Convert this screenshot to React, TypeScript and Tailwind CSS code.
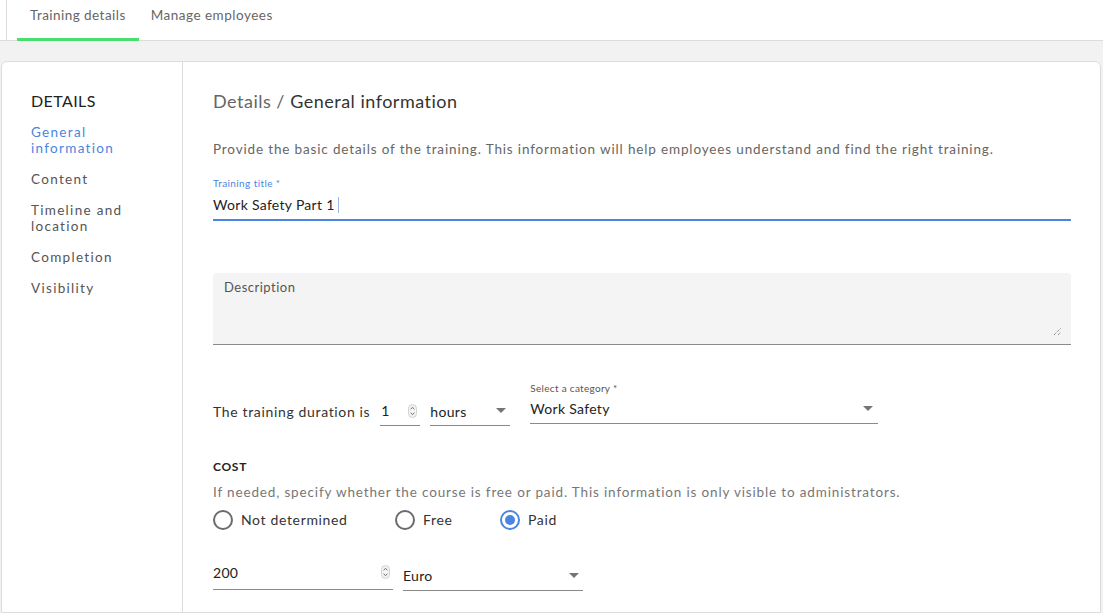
import React from "react";

const Caret = () => (
  <svg width="10" height="6" viewBox="0 0 10 6" className="shrink-0">
    <path d="M0 0 L10 0 L5 5 Z" fill="#757575" />
  </svg>
);

const Spinner = () => (
  <svg width="9" height="14" viewBox="0 0 9 14" className="shrink-0">
    <rect x="0.5" y="0.5" width="8" height="13" rx="4" fill="#f4f4f4" stroke="#c8c8c8" strokeWidth="0.8" />
    <path d="M2.6 5.2 L4.5 3.4 L6.4 5.2" fill="none" stroke="#555" strokeWidth="0.9" />
    <path d="M2.6 8.8 L4.5 10.6 L6.4 8.8" fill="none" stroke="#555" strokeWidth="0.9" />
  </svg>
);

const Radio = ({ checked, label, width }: { checked?: boolean; label: string; width: string }) => (
  <div className={`flex items-center gap-[8px] ${width}`}>
    <div
      className={`w-[20px] h-[20px] rounded-full border-2 flex items-center justify-center ${
        checked ? "border-[#4a86e0]" : "border-[#6b6b6b]"
      }`}
    >
      {checked && <div className="w-[10px] h-[10px] rounded-full bg-[#4a86e0]" />}
    </div>
    <span className="text-[14px] text-[#333] tracking-[0.65px]">{label}</span>
  </div>
);

export default function App() {
  const font = { fontFamily: "Lato, 'Open Sans', sans-serif" };
  return (
    <div className="w-[1103px] h-[613px] overflow-hidden bg-[#f2f2f2] flex flex-col" style={font}>
      {/* top tabs */}
      <div className="h-[41px] bg-white border-b border-[#dcdcdc] shrink-0 flex">
        <div className="ml-[6px] border-l border-[#dcdcdc] h-full pl-[10px] flex">
          <div className="px-[13px] h-full flex items-center relative">
            <span className="text-[13.5px] text-[#666] tracking-[0.45px] -mt-[10px]">Training details</span>
            <div className="absolute left-0 right-0 bottom-[-1px] h-[3px] bg-[#4ade6f]" />
          </div>
          <div className="px-[12px] h-full flex items-center">
            <span className="text-[13.5px] text-[#666] tracking-[0.5px] -mt-[10px]">Manage employees</span>
          </div>
        </div>
      </div>

      {/* card */}
      <div className="mt-[20px] ml-[1px] w-[1100px] flex-1 bg-white border border-[#dcdcdc] rounded-t-[6px] flex">
        {/* sidebar */}
        <div className="w-[181px] shrink-0 border-r border-[#dcdcdc] pl-[29px] pt-[29px]">
          <div className="text-[16px] text-[#222] tracking-[0.4px] leading-[20px]">DETAILS</div>
          <div className="mt-[13px] flex flex-col gap-[15px] text-[13.5px] leading-[16px] tracking-[1.3px]">
            <div className="text-[#4a86e0]">General<br />information</div>
            <div className="text-[#555]">Content</div>
            <div className="text-[#555]">Timeline and<br />location</div>
            <div className="text-[#555]">Completion</div>
            <div className="text-[#555]">Visibility</div>
          </div>
        </div>

        {/* main */}
        <div className="flex-1 pl-[30px] pr-[29px] pt-[28px]">
          <div className="text-[18px] leading-[22px] tracking-[0.5px]">
            <span className="text-[#666]">Details / </span>
            <span className="text-[#333]">General information</span>
          </div>
          <p className="mt-[28px] text-[13.5px] leading-[18px] text-[#666] tracking-[0.85px]">
            Provide the basic details of the training. This information will help employees understand and find the right training.
          </p>

          {/* training title */}
          <div className="mt-[19px] border-b-2 border-[#4a86e0] pb-[4px]">
            <div className="text-[10px] leading-[12px] text-[#4a86e0] tracking-[0.4px]">Training title *</div>
            <div className="mt-[6px] flex items-center text-[14px] text-[#222] leading-[20px] tracking-[0.3px]">
              Work Safety Part 1
              <span className="ml-[3px] inline-block w-[1px] h-[16px] bg-[#9bb9ea]" />
            </div>
          </div>

          {/* description */}
          <div className="mt-[52px] h-[72px] bg-[#f4f4f4] rounded-t-[4px] border-b border-[#8a8a8a] relative px-[11px] pt-[5px]">
            <div className="text-[13px] text-[#555] tracking-[0.5px] leading-[18px]">Description</div>
            <svg width="9" height="9" viewBox="0 0 9 9" className="absolute right-[9px] bottom-[8px]">
              <path d="M1 8 L8 1 M5 8 L8 5" stroke="#666" strokeWidth="1" strokeDasharray="1 1" />
            </svg>
          </div>

          {/* duration row */}
          <div className="mt-[37px] flex items-end">
            <div className="text-[14px] text-[#333] tracking-[0.65px] pb-[5px] leading-[18px]">The training duration is</div>
            <div className="ml-[10px] w-[40px] border-b border-[#8a8a8a] flex items-center justify-between pb-[5px] pl-[1px] pr-[3px]">
              <span className="text-[14px] text-[#222] leading-[18px]">1</span>
              <Spinner />
            </div>
            <div className="ml-[10px] w-[80px] border-b border-[#8a8a8a] flex items-center justify-between pb-[4px] pr-[4px]">
              <span className="text-[14px] text-[#222] leading-[18px] mt-[2px] tracking-[0.3px]">hours</span>
              <Caret />
            </div>
            <div className="ml-[20px] w-[348px] border-b border-[#8a8a8a] pb-[5px] mb-[2px]">
              <div className="text-[10px] leading-[12px] text-[#555] tracking-[0.3px]">Select a category *</div>
              <div className="mt-[6px] flex items-center justify-between pr-[5px]">
                <span className="text-[14px] text-[#222] leading-[18px] tracking-[0.3px]">Work Safety</span>
                <Caret />
              </div>
            </div>
          </div>

          {/* cost */}
          <div className="mt-[33px] text-[12px] font-bold text-[#222] tracking-[0.7px] leading-[16px]">COST</div>
          <p className="mt-[8px] text-[13.5px] text-[#777] tracking-[0.85px] leading-[18px]">
            If needed, specify whether the course is free or paid. This information is only visible to administrators.
          </p>
          <div className="mt-[8px] flex items-center">
            <Radio label="Not determined" width="w-[182px]" />
            <Radio label="Free" width="w-[105px]" />
            <Radio checked label="Paid" width="w-[100px]" />
          </div>

          <div className="mt-[34px] flex items-end">
            <div className="w-[180px] border-b border-[#8a8a8a] flex items-start justify-between pb-[7px] pr-[3px]">
              <span className="text-[14px] text-[#222] leading-[18px] tracking-[0.3px]">200</span>
              <span className="mt-[1px]"><Spinner /></span>
            </div>
            <div className="ml-[10px] w-[180px] border-b border-[#8a8a8a] flex items-center justify-between pb-[5px] pr-[4px] -mb-[1px]">
              <span className="text-[14px] text-[#222] leading-[18px] tracking-[0.3px]">Euro</span>
              <Caret />
            </div>
          </div>
        </div>
      </div>
    </div>
  );
}
